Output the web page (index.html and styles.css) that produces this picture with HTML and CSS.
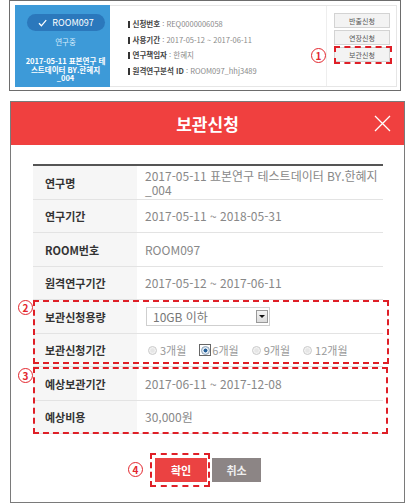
FILE: index.html
```html
<!DOCTYPE html>
<html lang="ko">
<head>
<meta charset="utf-8">
<link rel="stylesheet" href="styles.css">
</head>
<body>
<div class="shot">
  <div class="card">
    <div class="room">
      <div class="pill"><svg width="9" height="8" viewBox="0 0 9 8"><polyline points="1,4.2 3.4,6.8 8.2,1.2" fill="none" stroke="#fff" stroke-width="1.3"/></svg><span>ROOM097</span></div>
      <div class="status">연구중</div>
      <div class="rtitle">2017-05-11 표본연구 테<br>스트데이터 BY.한혜지<br>_004</div>
    </div>
    <ul class="info">
      <li><i class="bar"></i><b>신청번호</b> : REQ0000006058</li>
      <li><i class="bar"></i><b>사용기간</b> : 2017-05-12 ~ 2017-06-11</li>
      <li><i class="bar"></i><b>연구책임자</b> : 한혜지</li>
      <li><i class="bar"></i><b>원격연구분석 ID</b> : ROOM097_hhj3489</li>
    </ul>
    <div class="actions">
      <div class="act">반출신청</div>
      <div class="act">연장신청</div>
      <div class="act marked">보관신청<span class="num n1">1</span></div>
    </div>
  </div>
</div>

<div class="modal">
  <div class="head">
    <span></span>
    <h1 class="title">보관신청</h1>
    <span class="close"><svg width="17" height="17" viewBox="0 0 17 17"><path d="M1 1 L16 16 M16 1 L1 16" stroke="#fff" stroke-width="1.3" fill="none"/></svg></span>
  </div>
  <div class="body">
    <div class="table">
      <div class="row h34"><div class="th">연구명</div><div class="td">2017-05-11 표본연구 테스트데이터 BY.한혜지<br>_004</div></div>
      <div class="row h33"><div class="th">연구기간</div><div class="td">2017-05-11 ~ 2018-05-31</div></div>
      <div class="row h34"><div class="th">ROOM번호</div><div class="td">ROOM097</div></div>
      <div class="row h33"><div class="th">원격연구기간</div><div class="td">2017-05-12 ~ 2017-06-11</div></div>
      <div class="group g2">
        <span class="num n2">2</span>
        <div class="row h34"><div class="th">보관신청용량</div><div class="td">
          <div class="select"><span>10GB 이하</span><span class="drop"><i class="tri"></i></span></div>
        </div></div>
        <div class="row h33"><div class="th">보관신청기간</div><div class="td">
          <div class="radios">
            <span class="opt"><i class="radio"></i>3개월</span>
            <span class="opt"><span class="focus"><i class="radio on"></i></span>6개월</span>
            <span class="opt"><i class="radio"></i>9개월</span>
            <span class="opt"><i class="radio"></i>12개월</span>
          </div>
        </div></div>
      </div>
      <div class="group g3">
        <span class="num n3">3</span>
        <div class="row h34"><div class="th">예상보관기간</div><div class="td">2017-06-11 ~ 2017-12-08</div></div>
        <div class="row h33"><div class="th">예상비용</div><div class="td">30,000원</div></div>
      </div>
    </div>
    <div class="btns">
      <div class="btn ok">확인<span class="num n4">4</span></div>
      <div class="btn cancel">취소</div>
    </div>
  </div>
</div>
</body>
</html>
```

FILE: styles.css
```css
* { box-sizing: border-box; }
body {
  margin: 0;
  background: #fff;
  font-family: "Noto Sans CJK KR", "Noto Sans", sans-serif;
}

/* top screenshot */
.shot {
  margin-left: 9px;
  width: 392px;
  height: 91px;
  border: 1px solid #6d6d6d;
  padding: 4px 3px 3px 5px;
}
.card {
  display: flex;
  height: 100%;
  border: 1px solid #e6e6e6;
}
.room {
  width: 95px;
  margin: -1px 0 -1px -1px;
  background: #3d9ad8;
  color: #fff;
  text-align: center;
  padding: 9px 0 0 6px;
}
.pill {
  margin-left: 6px;
  width: 78px;
  height: 17px;
  border-radius: 9px;
  background: #2b78bc;
  display: flex;
  align-items: center;
  justify-content: center;
  gap: 5px;
  font-size: 9px;
  line-height: 1;
}
.status {
  margin-top: 6px;
  font-size: 7.5px;
  line-height: 10px;
  color: #d6ecfb;
}
.rtitle {
  margin-top: 10px;
  font-size: 7.5px;
  line-height: 8.5px;
  font-weight: bold;
}
.info {
  list-style: none;
  margin: 0;
  padding: 10px 0 0 18px;
  font-size: 7.5px;
  line-height: 15.5px;
  color: #8a8a8a;
}
.info b { color: #444; }
.bar {
  display: inline-block;
  width: 1.5px;
  height: 7px;
  background: #333;
  margin-right: 3px;
  vertical-align: -1px;
}
.actions {
  margin-left: auto;
  width: 70px;
  border-left: 1px solid #eee;
  padding: 7px 6px 0 7px;
  display: flex;
  flex-direction: column;
  gap: 2px;
}
.act {
  height: 15px;
  background: #f3f3f3;
  border: 1px solid #d3d3d3;
  color: #555;
  font-size: 7px;
  display: flex;
  align-items: center;
  justify-content: center;
}
.marked { position: relative; }
.marked::after {
  content: "";
  position: absolute;
  inset: -2px -3px -3px -1px;
  border: 2px dashed #df1f27;
}

/* number markers */
.num {
  position: absolute;
  width: 15px;
  height: 15px;
  border: 1.6px solid #e3262d;
  border-radius: 50%;
  background: #fff;
  color: #e3262d;
  font-size: 10px;
  font-weight: bold;
  line-height: 1;
  display: flex;
  align-items: center;
  justify-content: center;
}
.n1 { left: -24px; top: 0; }
.n2 { left: -15px; top: 0; }
.n3 { left: -15px; top: 1px; }
.n4 { left: -27px; top: 4px; }

/* modal */
.modal {
  margin: 10px 0 0 10px;
  width: 395px;
  border: 1px solid #7a7a7a;
}
.head {
  height: 43px;
  background: #f0403f;
  display: grid;
  grid-template-columns: 1fr auto 1fr;
  align-items: center;
  color: #fff;
}
.title {
  margin: 0;
  font-size: 17px;
  font-weight: bold;
}
.close {
  justify-self: end;
  margin-right: 13px;
  height: 17px;
  display: flex;
}
.body {
  padding: 19px 21px 20px 22px;
}
.table { border-top: 2px solid #555; }
.row {
  display: grid;
  grid-template-columns: 104px 1fr;
  border-bottom: 1px solid #e3e3e3;
}
.h34 { height: 34px; }
.h33 { height: 33px; }
.th {
  background: #f6f6f6;
  color: #333;
  font-size: 11px;
  font-weight: bold;
  padding-left: 12px;
  display: flex;
  align-items: center;
}
.td {
  color: #888;
  font-size: 12px;
  line-height: 14px;
  padding-left: 8px;
  display: flex;
  align-items: center;
}
.row:first-child .td { display: block; padding-top: 3px; }

.group { position: relative; }
.group::after {
  content: "";
  position: absolute;
  border: 2px dashed #df1f27;
  pointer-events: none;
}
.g2::after { left: 0; right: -6px; top: 0; bottom: 3px; }
.g3::after { left: 0; right: -5px; top: 0; bottom: 0; }

.select {
  margin-left: 1px;
  width: 124px;
  height: 19px;
  border: 1px solid #cfcfcf;
  display: flex;
  align-items: center;
  justify-content: space-between;
  padding: 0 1px 0 6px;
  color: #777;
  font-size: 12px;
}
.drop {
  width: 12px;
  height: 13px;
  border: 1px solid #9a9a9a;
  background: linear-gradient(#f4f4f4, #dcdcdc);
  display: flex;
  align-items: center;
  justify-content: center;
}
.tri {
  width: 0;
  height: 0;
  border-left: 3px solid transparent;
  border-right: 3px solid transparent;
  border-top: 3px solid #111;
}
.radios {
  display: flex;
  align-items: center;
  gap: 13px;
  margin-left: 3px;
  font-size: 11px;
  color: #999;
}
.opt {
  display: flex;
  align-items: center;
  gap: 3px;
}
.radio {
  width: 9px;
  height: 9px;
  border-radius: 50%;
  border: 1px solid #c9c9c9;
  background: radial-gradient(circle, #e6e6e6 30%, #f7f7f7 70%);
}
.radio.on {
  border-color: #8aa0b5;
  background: radial-gradient(circle, #24609a 35%, #dfe8f1 45%);
}
.focus {
  width: 12px;
  height: 12px;
  border: 1px solid #666;
  display: flex;
  align-items: center;
  justify-content: center;
  margin-right: -2px;
}

.btns {
  display: flex;
  justify-content: center;
  gap: 5px;
  margin-top: 24px;
}
.btn {
  height: 24px;
  color: #fff;
  font-size: 11px;
  font-weight: bold;
  display: flex;
  align-items: center;
  justify-content: center;
}
.ok {
  width: 52px;
  background: #eb4242;
  position: relative;
}
.ok::after {
  content: "";
  position: absolute;
  inset: -5px -3px -5px -5px;
  border: 2px dashed #df1f27;
}
.cancel {
  width: 49px;
  background: #8c8585;
  color: #eee;
}
```
